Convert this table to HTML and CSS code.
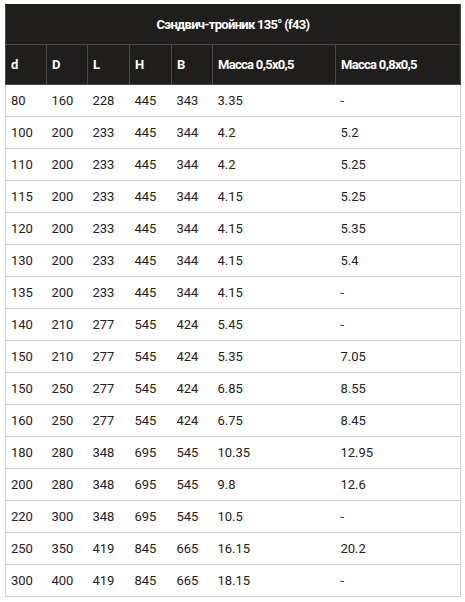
FILE: index.html
```html
<!DOCTYPE html>
<html>
<head>
<meta charset="utf-8">
<link rel="stylesheet" href="styles.css">
</head>
<body>
<table class="spec">
  <colgroup>
    <col class="c-s"><col class="c-s"><col class="c-m"><col class="c-m"><col class="c-s"><col class="c-w"><col>
  </colgroup>
  <thead>
    <tr class="title-row"><th colspan="7">Сэндвич-тройник 135° (f43)</th></tr>
    <tr class="head-row"><th>d</th><th>D</th><th>L</th><th>H</th><th>B</th><th>Масса 0,5х0,5</th><th>Масса 0,8х0,5</th></tr>
  </thead>
  <tbody>
    <tr><td>80</td><td>160</td><td>228</td><td>445</td><td>343</td><td>3.35</td><td>-</td></tr>
    <tr><td>100</td><td>200</td><td>233</td><td>445</td><td>344</td><td>4.2</td><td>5.2</td></tr>
    <tr><td>110</td><td>200</td><td>233</td><td>445</td><td>344</td><td>4.2</td><td>5.25</td></tr>
    <tr><td>115</td><td>200</td><td>233</td><td>445</td><td>344</td><td>4.15</td><td>5.25</td></tr>
    <tr><td>120</td><td>200</td><td>233</td><td>445</td><td>344</td><td>4.15</td><td>5.35</td></tr>
    <tr><td>130</td><td>200</td><td>233</td><td>445</td><td>344</td><td>4.15</td><td>5.4</td></tr>
    <tr><td>135</td><td>200</td><td>233</td><td>445</td><td>344</td><td>4.15</td><td>-</td></tr>
    <tr><td>140</td><td>210</td><td>277</td><td>545</td><td>424</td><td>5.45</td><td>-</td></tr>
    <tr><td>150</td><td>210</td><td>277</td><td>545</td><td>424</td><td>5.35</td><td>7.05</td></tr>
    <tr><td>150</td><td>250</td><td>277</td><td>545</td><td>424</td><td>6.85</td><td>8.55</td></tr>
    <tr><td>160</td><td>250</td><td>277</td><td>545</td><td>424</td><td>6.75</td><td>8.45</td></tr>
    <tr><td>180</td><td>280</td><td>348</td><td>695</td><td>545</td><td>10.35</td><td>12.95</td></tr>
    <tr><td>200</td><td>280</td><td>348</td><td>695</td><td>545</td><td>9.8</td><td>12.6</td></tr>
    <tr><td>220</td><td>300</td><td>348</td><td>695</td><td>545</td><td>10.5</td><td>-</td></tr>
    <tr><td>250</td><td>350</td><td>419</td><td>845</td><td>665</td><td>16.15</td><td>20.2</td></tr>
    <tr><td>300</td><td>400</td><td>419</td><td>845</td><td>665</td><td>18.15</td><td>-</td></tr>
  </tbody>
</table>
</body>
</html>
```
FILE: styles.css
```css
html, body {
  margin: 0;
  padding: 0;
  background: #ffffff;
}
body {
  padding: 4px 4px 0 5px;
  font-family: Roboto, "Liberation Sans", Arial, sans-serif;
}
.spec {
  width: 456px;
  border-collapse: collapse;
  table-layout: fixed;
  font-size: 13px;
  color: #222222;
}
.c-s { width: 41px; }
.c-m { width: 42px; }
.c-w { width: 123px; }
.spec th {
  background: #1f1e1c;
  color: #ffffff;
  font-weight: 700;
  letter-spacing: -0.7px;
  text-align: left;
  padding: 0 5px;
  height: 39px;
  border: 1px solid #4a4a48;
  white-space: nowrap;
}
.title-row th {
  text-align: center;
  border-top-color: #1f1e1c;
}
.spec td {
  height: 31px;
  padding: 0 5px;
  border-top: 1px solid #cfcfcf;
  border-bottom: 1px solid #cfcfcf;
  white-space: nowrap;
}
.spec td:first-child { border-left: 1px solid #cfcfcf; }
.spec td:last-child { border-right: 1px solid #cfcfcf; }
```
